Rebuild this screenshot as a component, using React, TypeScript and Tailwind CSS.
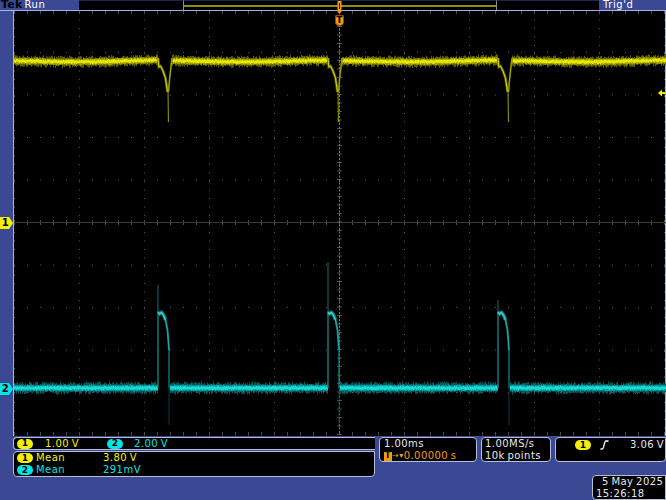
import React from 'react';

// seeded noise so every run draws the same trace
let seed = 7;
function rnd() {
  seed = (seed * 16807) % 2147483647;
  return seed / 2147483647;
}

const L = 14; // screen origin in page px
const T = 11;
const yellowGaps = [158, 328, 498];
const cyanGaps = [157.5, 327.5, 497.5];

function band(gaps: number[], gapW: number, base: (x: number) => number, amp: number, spread: number) {
  let d = '';
  for (let x = L; x < 666; x += 1) {
    if (gaps.some((g) => x >= g && x < g + gapW)) continue;
    const y = base(x) + (rnd() - 0.5) * 1;
    const a = amp + rnd() * spread;
    const b = amp + rnd() * spread;
    d += `M${x + 0.5} ${(y - a).toFixed(1)}V${(y + b).toFixed(1)}`;
  }
  return d;
}

const yBase = (x: number) => 61.5 + 0.7 * Math.cos((x - 80) / 27) - (x % 170) * 0.004;
const cBase = () => 388;

const yellowHalo = band(yellowGaps, 14, yBase, 3, 3);
const yellowMid = band(yellowGaps, 14, yBase, 2.4, 1);
const yellowCore = band(yellowGaps, 14, yBase, 1, 1);
const cyanHalo = band(cyanGaps, 12, cBase, 3, 3.4);
const cyanMid = band(cyanGaps, 12, cBase, 2.4, 1);
const cyanCore = band(cyanGaps, 12, cBase, 1.1, 1);

function Graticule() {
  const dots: string[] = [];
  const ticks: string[] = [];
  for (let i = 0; i <= 10; i++) {
    const x = 14 + i * 65;
    for (let y = 11; y < 436; y += 8.5) dots.push(`M${x} ${y.toFixed(1)}h1v1h-1z`);
    const yy = 9.5 + i * 42.5;
    for (let k = 14; k < 666; k += 13) dots.push(`M${k} ${yy.toFixed(1)}h1v1h-1z`);
  }
  for (let k = 14; k < 666; k += 13) {
    ticks.push(`M${k + 0.5} 11v3M${k + 0.5} 432v3M${k + 0.5} 220v5`);
  }
  for (let y = 9.5; y < 436; y += 8.5) ticks.push(`M337 ${y.toFixed(1)}h5`);
  return (
    <>
      <path d={dots.join('')} fill="#5c5c5c" />
      <path d={ticks.join('')} stroke="#4c4c42" strokeWidth="1" fill="none" />
      <path d="M14 222.5H666" stroke="#3c3c34" strokeWidth="1" />
      <path d="M339.5 11V435" stroke="#77776a" strokeWidth="1" strokeDasharray="2 1.5" />
    </>
  );
}

function YellowDip({ x }: { x: number }) {
  const p = (a: number, b: number) => `${x + a} ${b}`;
  const left = `M${p(0, 58)}L${p(0.8, 67)}L${p(2.5, 66)}L${p(5, 71)}L${p(7.5, 78)}L${p(9.5, 92)}`;
  const right = `M${p(14, 58)}L${p(12.8, 68)}L${p(11.5, 80)}L${p(10.5, 92)}`;
  return (
    <g fill="none">
      <path d={left} stroke="#6a6a00" strokeWidth="2.6" />
      <path d={right} stroke="#6a6a00" strokeWidth="1.8" />
      <path d={left} stroke="#d8d800" strokeWidth="1" />
      <path d={right} stroke="#b4b400" strokeWidth="0.8" />
      <path d={`M${p(10, 90)}L${p(10.4, 122)}`} stroke="#a0a000" strokeWidth="1" />
    </g>
  );
}

function CyanPulse({ x, top }: { x: number; top: number }) {
  const p = (a: number, b: number) => `${x + a} ${b}`;
  const head = `M${p(0.5, 312)}L${p(2, 314)}L${p(4, 312.5)}L${p(6, 315)}L${p(8, 320)}`;
  const tail = `M${p(8, 320)}L${p(10, 330)}L${p(11.5, 350)}`;
  return (
    <g fill="none">
      <path d={`M${x + 0.5} ${top}V311`} stroke="#0c4a4a" strokeWidth="1.5" />
      <path d={`M${x + 0.5} 311V388`} stroke="#0f8a8a" strokeWidth="1.3" />
      <path d={head} stroke="#0c7a7a" strokeWidth="3.6" />
      <path d={tail} stroke="#0c7a7a" strokeWidth="2" />
      <path d={head} stroke="#2fdcdc" strokeWidth="1.3" />
      <path d={tail} stroke="#1cb4b4" strokeWidth="0.9" />
      <path d={`M${x + 11.5} 350V388`} stroke="#0f8a8a" strokeWidth="1.2" />
      <path d={`M${x + 11.5} 388V425`} stroke="#0a3f3f" strokeWidth="1" />
    </g>
  );
}

function Badge({ n, className }: { n: number; className: string }) {
  return (
    <span
      className={`inline-flex h-[10px] w-[16px] shrink-0 items-center justify-center rounded-full text-[9px] leading-none font-bold text-black ${className}`}
    >
      {n}
    </span>
  );
}

const panel = 'border border-[#b4bedc] bg-black whitespace-nowrap';

export default function App() {
  return (
    <div
      className="relative flex h-[500px] w-[666px] flex-col overflow-hidden bg-[#3b4994] text-[10px] leading-[12px] tracking-[0.45px] [word-spacing:-1px] text-[#e8e8e8]"
      style={{ fontFamily: '"DejaVu Sans", sans-serif' }}
    >
      {/* top status bar */}
      <div className="flex h-[11px] shrink-0 border-b border-[#9fb2e6]">
        <div className="flex w-[79px] items-center gap-[2px] pl-[1px]">
          <span className="text-[11px] leading-[10px] font-bold tracking-[0.2px] text-black">Tek</span>
          <span className="text-[10px] leading-[10px] tracking-[0.6px] text-white">Run</span>
        </div>
        <div className="w-[104px] border-t border-[#1c2450] bg-black" />
        <div className="flex w-[314px] items-center border-x border-t border-[#8c8c8c] border-t-[#1c2450] bg-black">
          <div className="h-[2px] w-full bg-[#8f8f10]" />
        </div>
        <div className="w-[102px] border-t border-[#1c2450] bg-black" />
        <div className="flex-1 pl-[4px] text-[10px] leading-[10px] tracking-[0.6px] text-white">Trig'd</div>
      </div>

      {/* scope screen */}
      <div className="flex h-[425px] shrink-0">
        <div className="relative w-[14px] shrink-0 border-r border-[#9fb2e6]">
          <div className="absolute top-[206px] left-0 flex h-[12px] w-[13px] items-center justify-center bg-[#f2f200] pr-[2px] text-[10px] leading-none font-bold text-black [clip-path:polygon(0_0,70%_0,100%_50%,70%_100%,0_100%)]">
            1
          </div>
          <div className="absolute top-[372px] left-0 flex h-[12px] w-[13px] items-center justify-center bg-[#00e6e6] pr-[2px] text-[10px] leading-none font-bold text-black [clip-path:polygon(0_0,70%_0,100%_50%,70%_100%,0_100%)]">
            2
          </div>
        </div>
        <div className="relative flex-1 border-r border-[#9fb2e6] bg-black">
          <svg className="absolute top-0 left-0" width="652" height="425" viewBox={`${L} ${T} 652 425`}>
            <Graticule />
            <path d={yellowHalo} stroke="#5e5e00" strokeWidth="1" fill="none" />
            <path d={yellowMid} stroke="#a4a400" strokeWidth="1" fill="none" />
            <path d={yellowCore} stroke="#e8e800" strokeWidth="1" fill="none" />
            {yellowGaps.map((x) => (
              <YellowDip key={x} x={x} />
            ))}
            <path d={cyanHalo} stroke="#075858" strokeWidth="1" fill="none" />
            <path d={cyanMid} stroke="#0a9c9c" strokeWidth="1" fill="none" />
            <path d={cyanCore} stroke="#14dcdc" strokeWidth="1" fill="none" />
            <CyanPulse x={157.5} top={285} />
            <CyanPulse x={327.5} top={262} />
            <CyanPulse x={497.5} top={300} />
            {/* trigger level arrow */}
            <path d="M658 93l4-3.5v2.5h3v2h-3v2.5z" fill="#f0f000" />
          </svg>
          {/* trigger position marker */}
          <div className="absolute top-[4px] left-[321px] flex h-[11px] w-[9px] items-center justify-center rounded-t-[1px] rounded-b-[4px] border border-[#8a5200] bg-[#f59a12] text-[9px] leading-none font-bold text-black">
            T
          </div>
        </div>
      </div>

      {/* record view marker, sits across the status bar */}
      <svg className="absolute top-[1px] left-[336px]" width="7" height="13" viewBox="0 0 7 13">
        <path d="M1.5 0H5.5V9H6.5L3.5 13L0.5 9H1.5V1z" fill="#f59a12" />
        <path d="M3 2H4V8H3z" fill="#2a1800" />
      </svg>

      {/* readouts */}
      <div className="flex flex-1 pt-[1px]">
        <div className="ml-[13px] flex w-[362px] shrink-0 flex-col gap-[1px]">
          <div className={`flex h-[13px] items-center rounded-l-[4px] border-r-0 ${panel}`}>
            <Badge n={1} className="ml-[3px] bg-[#f2f200]" />
            <span className="ml-[12px] w-[62px] text-[#f2f200]">1.00 V</span>
            <Badge n={2} className="bg-[#00e6e6]" />
            <span className="ml-[11px] text-[#00e6e6]">2.00 V</span>
          </div>
          <div className={`flex h-[26px] flex-col justify-center rounded-b-[4px] rounded-l-[4px] ${panel}`}>
            <div className="flex items-center text-[#f2f200]">
              <Badge n={1} className="ml-[3px] bg-[#f2f200]" />
              <span className="ml-[3px] w-[67px]">Mean</span>
              <span>3.80 V</span>
            </div>
            <div className="flex items-center text-[#00e6e6]">
              <Badge n={2} className="ml-[3px] bg-[#00e6e6]" />
              <span className="ml-[3px] w-[67px]">Mean</span>
              <span>291mV</span>
            </div>
          </div>
        </div>
        <div className="ml-[4px] flex flex-1 flex-col">
          <div className="flex h-[25px] gap-[4px]">
            <div className={`w-[98px] rounded-[4px] pl-[4px] ${panel}`}>
              <div>1.00ms</div>
              <div className="flex items-center text-[#f59a12]">
                <span className="flex h-[9px] w-[8px] items-center justify-center bg-[#f59a12] text-[8px] leading-none font-bold text-black">
                  T
                </span>
                <span className="text-[8px]">→▾</span>
                <span>0.00000 s</span>
              </div>
            </div>
            <div className={`w-[70px] rounded-[4px] pl-[3px] ${panel}`}>
              <div>1.00MS/s</div>
              <div>10k points</div>
            </div>
            <div className={`flex flex-1 items-start rounded-b-[4px] rounded-l-[4px] pt-[1px] ${panel}`}>
              <Badge n={1} className="mt-[1px] ml-[19px] bg-[#f2f200]" />
              <svg className="mt-[1px] ml-[9px] shrink-0" width="9" height="10" viewBox="0 0 9 10">
                <path d="M0.5 9H2.5C4 9 4 1 6 1H8.5" stroke="#fff" strokeWidth="1.3" fill="none" />
              </svg>
              <span className="ml-[21px]">3.06 V</span>
            </div>
          </div>
          <div className="mt-[13px] flex justify-end">
            <div className={`h-[25px] w-[74px] rounded-l-[4px] pl-[3px] ${panel}`}>
              <div className="pl-[6px]">5 May 2025</div>
              <div>15:26:18</div>
            </div>
          </div>
        </div>
      </div>
    </div>
  );
}
